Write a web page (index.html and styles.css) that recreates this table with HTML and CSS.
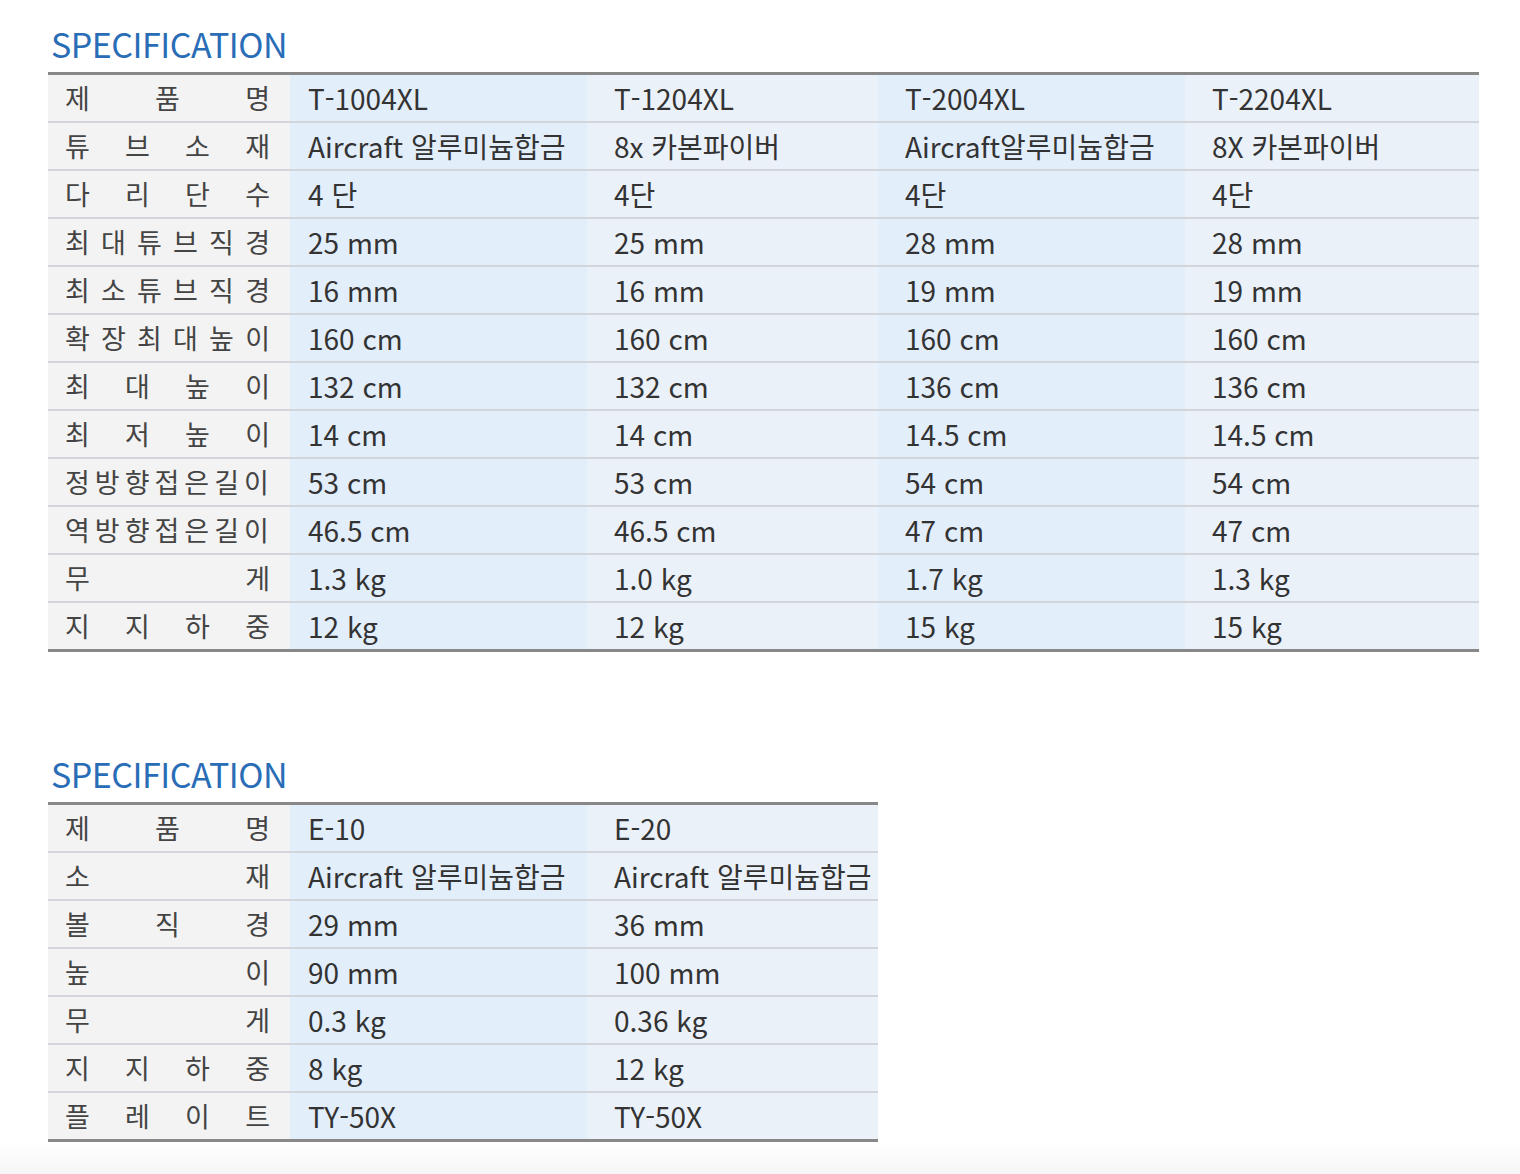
FILE: index.html
```html
<!DOCTYPE html>
<html lang="ko">
<head>
<meta charset="utf-8">
<link rel="stylesheet" href="styles.css">
</head>
<body>
<div class="page">
  <section class="spec">
    <h2 class="spec-title">SPECIFICATION</h2>
    <table class="spec-table wide">
      <tr><th>제 품 명</th><td>T-1004XL</td><td>T-1204XL</td><td>T-2004XL</td><td>T-2204XL</td></tr>
      <tr><th>튜 브 소 재</th><td>Aircraft 알루미늄합금</td><td>8x 카본파이버</td><td>Aircraft알루미늄합금</td><td>8X 카본파이버</td></tr>
      <tr><th>다 리 단 수</th><td>4 단</td><td>4단</td><td>4단</td><td>4단</td></tr>
      <tr><th class="tight">최 대 튜 브 직 경</th><td>25 mm</td><td>25 mm</td><td>28 mm</td><td>28 mm</td></tr>
      <tr><th class="tight">최 소 튜 브 직 경</th><td>16 mm</td><td>16 mm</td><td>19 mm</td><td>19 mm</td></tr>
      <tr><th class="tight">확 장 최 대 높 이</th><td>160 cm</td><td>160 cm</td><td>160 cm</td><td>160 cm</td></tr>
      <tr><th>최 대 높 이</th><td>132 cm</td><td>132 cm</td><td>136 cm</td><td>136 cm</td></tr>
      <tr><th>최 저 높 이</th><td>14 cm</td><td>14 cm</td><td>14.5 cm</td><td>14.5 cm</td></tr>
      <tr><th class="solid">정방향접은길이</th><td>53 cm</td><td>53 cm</td><td>54 cm</td><td>54 cm</td></tr>
      <tr><th class="solid">역방향접은길이</th><td>46.5 cm</td><td>46.5 cm</td><td>47 cm</td><td>47 cm</td></tr>
      <tr><th>무 게</th><td>1.3 kg</td><td>1.0 kg</td><td>1.7 kg</td><td>1.3 kg</td></tr>
      <tr><th>지 지 하 중</th><td>12 kg</td><td>12 kg</td><td>15 kg</td><td>15 kg</td></tr>
    </table>
  </section>

  <section class="spec second">
    <h2 class="spec-title">SPECIFICATION</h2>
    <table class="spec-table narrow">
      <tr><th>제 품 명</th><td>E-10</td><td>E-20</td></tr>
      <tr><th>소 재</th><td>Aircraft 알루미늄합금</td><td>Aircraft 알루미늄합금</td></tr>
      <tr><th>볼 직 경</th><td>29 mm</td><td>36 mm</td></tr>
      <tr><th>높 이</th><td>90 mm</td><td>100 mm</td></tr>
      <tr><th>무 게</th><td>0.3 kg</td><td>0.36 kg</td></tr>
      <tr><th>지 지 하 중</th><td>8 kg</td><td>12 kg</td></tr>
      <tr><th>플 레 이 트</th><td>TY-50X</td><td>TY-50X</td></tr>
    </table>
  </section>
</div>
</body>
</html>
```

FILE: styles.css
```css
html, body {
  margin: 0;
  padding: 0;
  background: #ffffff;
}
body {
  font-family: "Noto Sans CJK KR", "Noto Sans", sans-serif;
  color: #333;
  min-height: 1174px;
  background: linear-gradient(to bottom, #ffffff 0, #ffffff 1140px, #f6f6f6 1174px);
}
.page {
  padding: 22px 0 0 48px;
}
.spec-title {
  margin: 0 0 6px 3px;
  font-size: 34px;
  font-weight: 400;
  line-height: 44px;
  color: #2a6db7;
  letter-spacing: -0.5px;
}
.spec.second {
  margin-top: 100px;
}
.spec-table {
  border-collapse: collapse;
  border-top: 3px solid #888;
  border-bottom: 3px solid #888;
  table-layout: fixed;
  font-size: 28px;
}
.spec-table.wide { width: 1431px; }
.spec-table.narrow { width: 830px; }
.spec-table tr + tr th,
.spec-table tr + tr td {
  border-top: 2px solid #d2d6db;
}
.spec-table th,
.spec-table td {
  height: 46px;
  padding: 0;
  line-height: 46px;
  white-space: nowrap;
  overflow: hidden;
}
.spec-table th {
  width: 242px;
  box-sizing: border-box;
  padding: 0 20px 0 17px;
  background: #f3f3f3;
  color: #444;
  font-weight: 400;
  text-align: justify;
  text-align-last: justify;
  font-size: 27px;
}
.spec-table th.tight {
  word-spacing: -6px;
}
.spec-table th.solid {
  letter-spacing: 5px;
  text-align: left;
  text-align-last: left;
}
.spec-table td {
  padding-left: 27px;
  color: #333;
}
.spec-table td:first-of-type {
  padding-left: 18px;
}
.spec-table td:nth-of-type(odd) { background: #e3eefb; }
.spec-table td:nth-of-type(even) { background: #ebf1f9; }
.spec-table.wide td:nth-of-type(1) { width: 279px; }
.spec-table.wide td:nth-of-type(2) { width: 264px; }
.spec-table.wide td:nth-of-type(3) { width: 280px; }
.spec-table.narrow td:nth-of-type(1) { width: 279px; }
```
